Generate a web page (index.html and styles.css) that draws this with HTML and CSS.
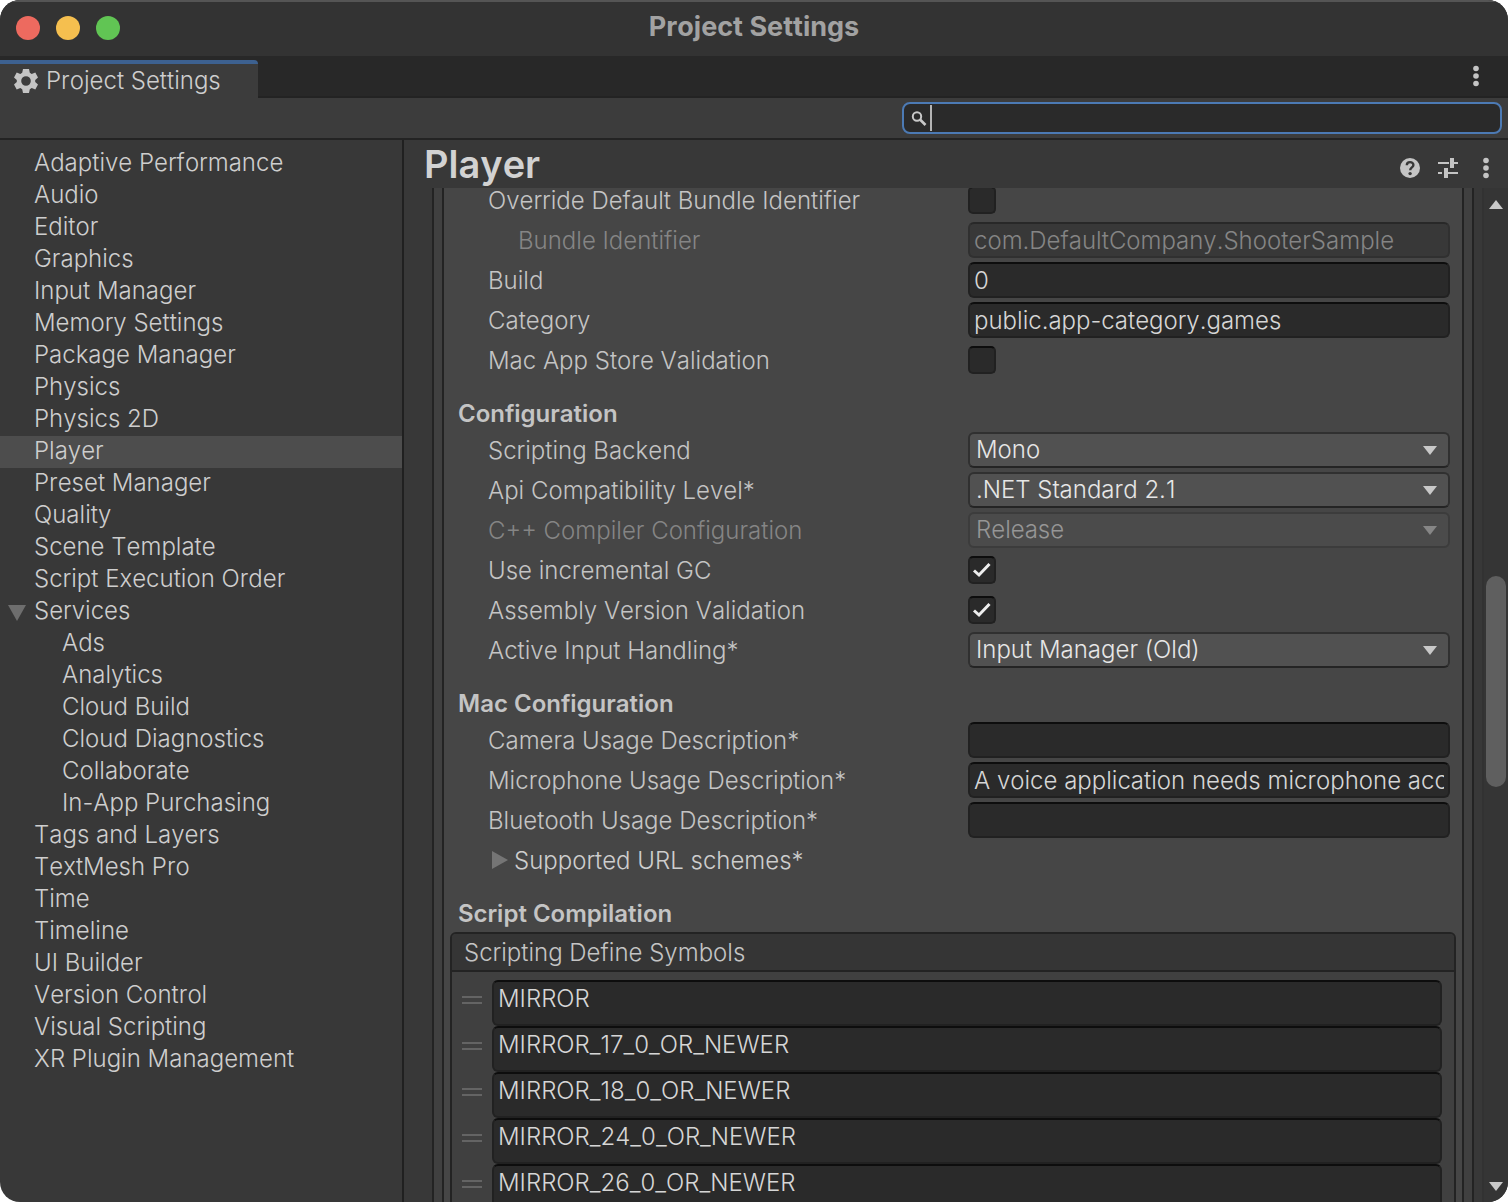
FILE: index.html
```html
<!DOCTYPE html>
<html lang="en">
<head>
  <meta charset="UTF-8">
  <meta name="viewport" content="width=device-width, initial-scale=1.0">
  <title>Project Settings</title>
  <link rel="stylesheet" href="styles.css">
</head>
<body>
  <div class="window">
    <header class="titlebar">
      <div class="lights">
        <button class="light red" aria-label="Close"></button>
        <button class="light yellow" aria-label="Minimize"></button>
        <button class="light green" aria-label="Zoom"></button>
      </div>
      <h1>Project Settings</h1>
    </header>

    <div class="tabs">
      <button class="tab">
        <svg width="24" height="24" viewBox="0 0 24 24"><path fill="#c4c4c4" fill-rule="evenodd" d="M9 0h6l.8 3.800 1.900 1.100L21.300 3.600l2.700 4.800-2.800 2.600v2l2.800 2.600-2.700 4.800-3.600-1.300-1.900 1.100L15 24H9l-.8-3.800-1.900-1.100-3.600 1.300L0 15.600 2.800 13v-2L0 8.400l2.700-4.800 3.600 1.300 1.900-1.100zM12 7.200a4.800 4.800 0 1 0 0 9.600 4.800 4.800 0 0 0 0-9.600z"/></svg>
        <span>Project Settings</span>
      </button>
      <button class="icon" aria-label="Window menu">
        <svg width="8" height="22" viewBox="0 0 8 22" fill="#c4c4c4"><circle cx="4" cy="3.500" r="2.800"/><circle cx="4" cy="11" r="2.800"/><circle cx="4" cy="18.500" r="2.800"/></svg>
      </button>
    </div>

    <div class="toolbar">
      <label class="search">
        <svg width="16" height="16" viewBox="0 0 16 16" fill="none" stroke="#c8c8c8"><circle cx="6" cy="6.500" r="4.200" stroke-width="2"/><path d="M9 9.500l5.500 5.500" stroke-width="2.600"/></svg>
        <span class="caret"></span>
        <input type="text" aria-label="Search settings">
      </label>
    </div>

    <main class="main">
      <nav class="sidebar">
        <ul>
          <li><a href="#">Adaptive Performance</a></li>
          <li><a href="#">Audio</a></li>
          <li><a href="#">Editor</a></li>
          <li><a href="#">Graphics</a></li>
          <li><a href="#">Input Manager</a></li>
          <li><a href="#">Memory Settings</a></li>
          <li><a href="#">Package Manager</a></li>
          <li><a href="#">Physics</a></li>
          <li><a href="#">Physics 2D</a></li>
          <li><a href="#" class="selected">Player</a></li>
          <li><a href="#">Preset Manager</a></li>
          <li><a href="#">Quality</a></li>
          <li><a href="#">Scene Template</a></li>
          <li><a href="#">Script Execution Order</a></li>
          <li class="group">
            <button class="fold" aria-label="Collapse Services"><svg width="18" height="16" viewBox="0 0 18 16"><path fill="#6e6e6e" d="M0 0h18L9 16z"/></svg></button>
            <a href="#">Services</a>
            <ul>
              <li><a href="#">Ads</a></li>
              <li><a href="#">Analytics</a></li>
              <li><a href="#">Cloud Build</a></li>
              <li><a href="#">Cloud Diagnostics</a></li>
              <li><a href="#">Collaborate</a></li>
              <li><a href="#">In-App Purchasing</a></li>
            </ul>
          </li>
          <li><a href="#">Tags and Layers</a></li>
          <li><a href="#">TextMesh Pro</a></li>
          <li><a href="#">Time</a></li>
          <li><a href="#">Timeline</a></li>
          <li><a href="#">UI Builder</a></li>
          <li><a href="#">Version Control</a></li>
          <li><a href="#">Visual Scripting</a></li>
          <li><a href="#">XR Plugin Management</a></li>
        </ul>
      </nav>

      <section class="content">
        <div class="content-header">
          <h2>Player</h2>
          <div class="actions">
            <button class="icon" aria-label="Help">
              <svg width="20" height="20" viewBox="0 0 20 20"><circle cx="10" cy="10" r="10" fill="#c4c4c4"/><path d="M6.800 7.200c0-4 6.600-4 6.600-.2 0 2.400-3.200 2.400-3.200 5.200" fill="none" stroke="#383838" stroke-width="2.400"/><circle cx="10.100" cy="15.600" r="1.700" fill="#383838"/></svg>
            </button>
            <button class="icon" aria-label="Presets">
              <svg width="20" height="20" viewBox="0 0 20 20" fill="#c4c4c4"><path d="M0 4h11v2H0zM12 0h4v10h-4zM16 4h4v2h-4zM0 14h4v2H0zM6 10h4v10H6zM10 14h10v2H10z"/></svg>
            </button>
            <button class="icon menu" aria-label="Player menu">
              <svg width="8" height="22" viewBox="0 0 8 22" fill="#c4c4c4"><circle cx="4" cy="3.500" r="2.800"/><circle cx="4" cy="11" r="2.800"/><circle cx="4" cy="18.500" r="2.800"/></svg>
            </button>
          </div>
        </div>

        <div class="scroller">
          <div class="outer">
            <form class="panel">
              <div class="row">
                <label for="override">Override Default Bundle Identifier</label>
                <span class="check"><input type="checkbox" id="override"></span>
              </div>
              <div class="row disabled nested">
                <label for="bundle">Bundle Identifier</label>
                <input type="text" id="bundle" value="com.DefaultCompany.ShooterSample" disabled>
              </div>
              <div class="row">
                <label for="build">Build</label>
                <input type="text" id="build" value="0">
              </div>
              <div class="row">
                <label for="category">Category</label>
                <input type="text" id="category" value="public.app-category.games">
              </div>
              <div class="row">
                <label for="validation">Mac App Store Validation</label>
                <span class="check"><input type="checkbox" id="validation"></span>
              </div>

              <h3>Configuration</h3>
              <div class="row">
                <label for="backend">Scripting Backend</label>
                <span class="select"><select id="backend"><option>Mono</option></select></span>
              </div>
              <div class="row">
                <label for="api">Api Compatibility Level*</label>
                <span class="select"><select id="api"><option>.NET Standard 2.1</option></select></span>
              </div>
              <div class="row disabled">
                <label for="cpp">C++ Compiler Configuration</label>
                <span class="select"><select id="cpp" disabled><option>Release</option></select></span>
              </div>
              <div class="row">
                <label for="gc">Use incremental GC</label>
                <span class="check"><input type="checkbox" id="gc" checked><svg width="28" height="28" viewBox="0 0 28 28"><path d="M6 14.500l5 4.500L21.500 8"/></svg></span>
              </div>
              <div class="row">
                <label for="assembly">Assembly Version Validation</label>
                <span class="check"><input type="checkbox" id="assembly" checked><svg width="28" height="28" viewBox="0 0 28 28"><path d="M6 14.500l5 4.500L21.500 8"/></svg></span>
              </div>
              <div class="row">
                <label for="handling">Active Input Handling*</label>
                <span class="select"><select id="handling"><option>Input Manager (Old)</option></select></span>
              </div>

              <h3>Mac Configuration</h3>
              <div class="row">
                <label for="camera">Camera Usage Description*</label>
                <input type="text" id="camera">
              </div>
              <div class="row">
                <label for="microphone">Microphone Usage Description*</label>
                <input type="text" id="microphone" value="A voice application needs microphone access">
              </div>
              <div class="row">
                <label for="bluetooth">Bluetooth Usage Description*</label>
                <input type="text" id="bluetooth">
              </div>
              <div class="row">
                <button type="button" class="foldout">
                  <svg width="16" height="18" viewBox="0 0 16 18"><path fill="#757575" d="M0 0v18l16-9z"/></svg>
                  <span>Supported URL schemes*</span>
                </button>
              </div>

              <h3>Script Compilation</h3>
              <div class="list">
                <h4>Scripting Define Symbols</h4>
                <ul>
                  <li><span class="handle"></span><input type="text" aria-label="Symbol 1" value="MIRROR"></li>
                  <li><span class="handle"></span><input type="text" aria-label="Symbol 2" value="MIRROR_17_0_OR_NEWER"></li>
                  <li><span class="handle"></span><input type="text" aria-label="Symbol 3" value="MIRROR_18_0_OR_NEWER"></li>
                  <li><span class="handle"></span><input type="text" aria-label="Symbol 4" value="MIRROR_24_0_OR_NEWER"></li>
                  <li><span class="handle"></span><input type="text" aria-label="Symbol 5" value="MIRROR_26_0_OR_NEWER"></li>
                </ul>
              </div>
            </form>
          </div>

          <div class="scrollbar">
            <button aria-label="Scroll up"><svg width="14" height="9" viewBox="0 0 14 9"><path fill="#c8c8c8" d="M0 9h14L7 0z"/></svg></button>
            <div class="thumb"></div>
            <button class="down" aria-label="Scroll down"><svg width="14" height="9" viewBox="0 0 14 9"><path fill="#c8c8c8" d="M0 0h14L7 9z"/></svg></button>
          </div>
        </div>
      </section>
    </main>
  </div>
</body>
</html>
```
FILE: styles.css
```css
* {
  box-sizing: border-box;
}

body {
  margin: 0;
  background: #fff;
  color: #cecece;
  font-family: Inter, "Liberation Sans", sans-serif;
  font-size: 24px;
  font-weight: 350;
  font-kerning: none;
  line-height: 32px;
}

h1, h2, h3, h4, ul {
  margin: 0;
  padding: 0;
}

ul {
  list-style: none;
}

button, input, select {
  font: inherit;
  font-kerning: inherit;
  color: inherit;
  margin: 0;
}

button {
  background: none;
  border: none;
  padding: 0;
}

svg {
  display: block;
}

.window {
  height: 100vh;
  display: flex;
  flex-direction: column;
  background: #383838;
  border-radius: 20px;
  overflow: hidden;
}

/* title bar */
.titlebar {
  height: 56px;
  flex: none;
  display: grid;
  grid-template-columns: 1fr auto 1fr;
  align-items: center;
  padding: 0 16px;
  background: #333;
  box-shadow: inset 0 2px #555;
}

.lights {
  display: flex;
  gap: 16px;
}

.light {
  width: 24px;
  height: 24px;
  border-radius: 50%;
}

.red { background: #ed6a5f; }
.yellow { background: #f5bf4f; }
.green { background: #61c554; }

.titlebar h1 {
  font-size: 27px;
  font-weight: 700;
  line-height: 32px;
  color: #a2a2a2;
  padding-bottom: 2px;
}

/* tab strip */
.tabs {
  height: 42px;
  flex: none;
  display: flex;
  justify-content: space-between;
  padding-top: 4px;
  padding-right: 28px;
  background: #282828;
  box-shadow: inset 0 -2px #232323;
}

.tab {
  width: 258px;
  display: flex;
  align-items: center;
  gap: 8px;
  padding-left: 14px;
  background: #3c3c3c;
  border-top: 4px solid #3d6190;
  border-radius: 0 4px 0 0;
}

.icon {
  display: flex;
  align-items: center;
}

.tabs .icon {
  padding-bottom: 6px;
}

.toolbar {
  height: 42px;
  flex: none;
  display: flex;
  justify-content: flex-end;
  padding: 4px 6px;
  background: #3c3c3c;
  border-bottom: 2px solid #232323;
}

.search {
  width: 600px;
  display: flex;
  align-items: center;
  padding-left: 7px;
  background: #2a2a2a;
  border: 2px solid #4c7ab4;
  border-radius: 8px;
}

.caret {
  width: 2px;
  height: 26px;
  margin-left: 3px;
  background: #b4b4b4;
}

.search input {
  flex: 1;
  min-width: 0;
  height: 26px;
  background: none;
  border: none;
  outline: none;
}

.main {
  flex: 1;
  min-height: 0;
  display: flex;
}

/* category list */
.sidebar {
  width: 404px;
  flex: none;
  padding-top: 8px;
  border-right: 2px solid #202020;
}

.sidebar a {
  display: block;
  padding-left: 34px;
  line-height: 30px;
  padding-bottom: 2px;
  color: #cecece;
  text-decoration: none;
}

.sidebar a.selected {
  background: #4d4d4d;
}

.sidebar ul ul a {
  padding-left: 62px;
}

.group {
  position: relative;
}

.fold {
  position: absolute;
  left: 8px;
  top: 9px;
}

/* settings pane */
.content {
  flex: 1;
  min-width: 0;
  display: flex;
  flex-direction: column;
}

.content-header {
  height: 48px;
  flex: none;
  display: flex;
  justify-content: space-between;
  padding: 0 18px 0 20px;
}

.content-header h2 {
  font-size: 38px;
  font-weight: 600;
  line-height: 48px;
  color: #d2d2d2;
}

.actions {
  display: flex;
  align-items: center;
  gap: 18px;
  padding-top: 8px;
}

.actions .menu {
  padding-left: 6px;
}

.scroller {
  flex: 1;
  min-height: 0;
  display: flex;
  overflow: hidden;
}

.outer {
  flex: 1;
  min-width: 0;
  margin: -6px 8px 0 28px;
  padding: 0 8px;
  background: #404040;
  border: solid #232323;
  border-width: 0 2px;
}

.panel {
  min-height: 100%;
  padding: 0 12px 0 14px;
  background: #464646;
  border: solid #232323;
  border-width: 0 2px;
}

.row {
  display: grid;
  grid-template-columns: 480px 1fr;
  align-items: center;
  height: 36px;
  margin-bottom: 4px;
  margin-left: 30px;
}

.row label {
  padding-top: 2px;
  color: #c4c4c4;
}

.nested label {
  padding-left: 30px;
}

.disabled label {
  color: #858585;
}

.panel h3 {
  margin-top: 18px;
  font-size: 24px;
  font-weight: 600;
  line-height: 36px;
  color: #c4c4c4;
}

.panel input[type=text] {
  width: 100%;
  min-width: 0;
  height: 36px;
  padding: 0 4px;
  color: #d6d6d6;
  background: #2a2a2a;
  border: 2px solid #212121;
  border-top-color: #0d0d0d;
  border-radius: 6px;
}

.panel input[type=text]:disabled {
  color: #858585;
  background: #383838;
  border-color: #303030;
  border-top-color: #282828;
}

.check {
  display: grid;
  width: 28px;
  height: 28px;
}

.check > * {
  grid-area: 1 / 1;
}

.check input {
  appearance: none;
  width: 28px;
  height: 28px;
  background: #2a2a2a;
  border: 2px solid #212121;
  border-top-color: #0d0d0d;
  border-radius: 5px;
}

.check svg {
  fill: none;
  stroke: #eee;
  stroke-width: 3;
  pointer-events: none;
}

.select {
  position: relative;
}

.select select {
  display: block;
  appearance: none;
  width: 100%;
  height: 36px;
  padding: 0 36px 2px 6px;
  color: #e6e6e6;
  background: #515151;
  border: 2px solid #303030;
  border-bottom-color: #242424;
  border-radius: 6px;
}

.select::after {
  content: "";
  position: absolute;
  right: 13px;
  top: 14px;
  width: 14px;
  height: 9px;
  background: #c8c8c8;
  clip-path: polygon(0 0, 100% 0, 50% 100%);
  pointer-events: none;
}

.select select:disabled {
  opacity: 1;
  color: #969696;
  background: #4b4b4b;
  border-color: #3c3c3c;
}

.disabled .select::after {
  background: #868686;
}

.foldout {
  display: flex;
  align-items: center;
  gap: 6px;
  padding-left: 4px;
}

.foldout span {
  padding-top: 2px;
}

/* define symbols */
.list {
  margin: 0 -6px 0 -8px;
  background: #404040;
  border: 2px solid #232323;
  border-radius: 6px 6px 0 0;
}

.list h4 {
  padding: 2px 0 0 12px;
  font-size: 24px;
  font-weight: 350;
  line-height: 34px;
  color: #c4c4c4;
  background: #353535;
  border-bottom: 2px solid #232323;
  border-radius: 4px 4px 0 0;
}

.list ul {
  padding: 8px 12px 0 10px;
}

.list li {
  display: flex;
  gap: 10px;
}

.handle {
  width: 20px;
  height: 8px;
  flex: none;
  margin-top: 16px;
  border: solid #646464;
  border-width: 2px 0;
}

.panel .list input {
  height: 46px;
  padding-bottom: 10px;
}

.scrollbar {
  width: 26px;
  flex: none;
  display: grid;
  grid-template-rows: 32px 356fr 211fr 383fr 32px;
  justify-items: center;
  background: #353535;
  border-left: 2px solid #323232;
}

.scrollbar button {
  grid-row: 1;
}

.scrollbar .down {
  grid-row: 5;
}

.thumb {
  grid-row: 3;
  width: 20px;
  background: #5f5f5f;
  border-radius: 10px;
}
```
